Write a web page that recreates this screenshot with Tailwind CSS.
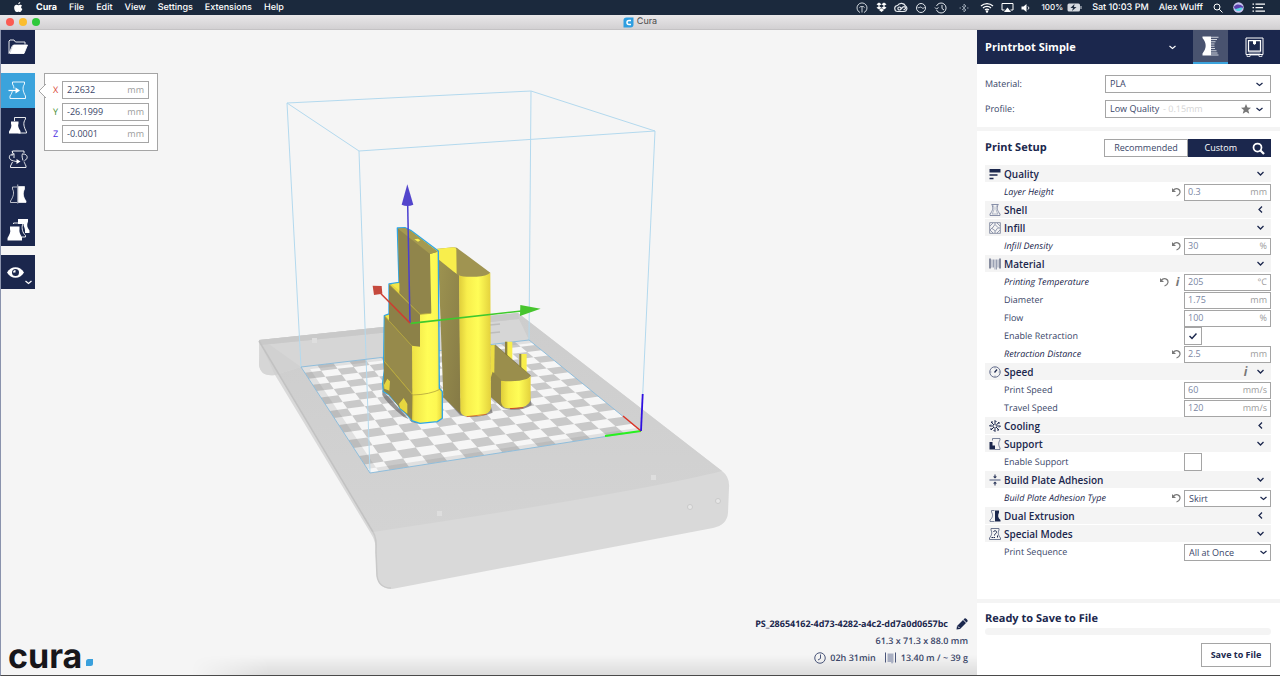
<!DOCTYPE html>
<html lang="en">
<head>
<meta charset="utf-8">
<meta name="viewport" content="width=device-width, initial-scale=1">
<title>Cura</title>
<script src="https://cdn.jsdelivr.net/npm/@tailwindcss/browser@4"></script>
</head>
<body class="h-screen overflow-hidden flex flex-col bg-[#f5f5f5] font-['Open_Sans',sans-serif] [text-rendering:geometricPrecision] text-[9px] leading-4 text-[#3a4668]">

<!-- System menu bar -->
<header class="h-[15px] shrink-0 flex items-center justify-between bg-[#1b293d] text-white font-['Inter',sans-serif] text-[9px] leading-[15px] font-medium pl-[14px] pr-[15px]">
  <nav class="flex items-center gap-3">
    <svg class="w-[9px] h-[11px] mr-[1px]" viewBox="0 0 18 22" fill="#fff"><path d="M12.500 0c.3 2-1.700 4.600-4 4.600C8.200 2.500 10.200.3 12.500 0zM16 7.500c-2.600 1.600-2.300 5.300.7 6.600-.8 2.400-2.700 6-4.700 6.100-1.200 0-1.700-.8-3.200-.8s-2.100.8-3.200.8C3 20.100.3 15.500.3 11.400c0-3.800 2.400-5.900 4.800-5.900 1.600 0 2.700 1 3.800 1s2.200-1.100 4.100-1.100c1.200 0 2.300.8 3 2.100z"/></svg>
    <a href="#" class="font-bold">Cura</a><a href="#">File</a><a href="#">Edit</a><a href="#">View</a><a href="#">Settings</a><a href="#">Extensions</a><a href="#">Help</a>
  </nav>
  <div class="flex items-center gap-[10px]">
    <div class="flex items-center gap-[7px]">
      <svg class="w-3 h-3 mr-[1px]" viewBox="0 0 24 24" fill="none" stroke="#dfe4ea" stroke-width="1.800"><path d="M8 21a10 10 0 1 1 8 0M12 21V9M7 11c1-2 3-2 5-2s4 0 5 2"/></svg>
      <svg class="w-[11px] h-[11px]" viewBox="0 0 22 22" fill="#fff"><path d="M6 1l5 3.500L6 8 1 4.500zM16 1l5 3.500L16 8l-5-3.500zM6 8l5 3.500L6 15l-5-3.500zM16 8l5 3.500-5 3.500-5-3.500zM6 16l5-3.500 5 3.500-5 4z"/></svg>
      <svg class="w-[14px] h-[11px]" viewBox="0 0 28 22" fill="none" stroke="#e5e9ee" stroke-width="2.400"><path d="M8 19a6 6 0 0 1-1-12 9 9 0 0 1 16 1 6 6 0 0 1-3 11z"/><path d="M16 14l-3-3a3 3 0 1 0 0 4l5-5a3 3 0 1 1 1 5"/></svg>
      <svg class="w-3 h-3" viewBox="0 0 24 24" fill="none" stroke="#dfe4ea" stroke-width="2"><circle cx="12" cy="12" r="9"/><path d="M5 10c3 4 5-2 8 1s4 1 6 0"/></svg>
      <svg class="w-[14px] h-3" viewBox="0 0 28 24" fill="none" stroke="#dfe4ea" stroke-width="2"><path d="M5 8a10 10 0 1 1 0 8M16 6v7l4 3M2 11l3 3 4-3"/></svg>
      <svg class="w-[10px] h-[10px] mx-1" viewBox="0 0 20 20" fill="none" stroke="#8c98a6" stroke-width="2"><path d="M6 6l8 8-4 4V2l4 4-8 8M1 10h3M16 10h3"/></svg>
      <svg class="w-[14px] h-[11px]" viewBox="0 0 28 22" fill="none" stroke="#fff" stroke-width="2.500"><path d="M2 8a17 17 0 0 1 24 0M6 12a11.500 11.500 0 0 1 16 0M10 16a6 6 0 0 1 8 0"/><circle cx="14" cy="19" r="1.200" fill="#fff"/></svg>
      <svg class="w-[13px] h-[11px]" viewBox="0 0 26 22" fill="none" stroke="#fff" stroke-width="2"><path d="M7 16H2V3h22v13h-5"/><path d="M13 11l7 9H6z" fill="#fff" stroke="none"/></svg>
      <svg class="w-[11px] h-[10px]" viewBox="0 0 22 20"><path d="M1 7h4l6-5v16l-6-5H1z" fill="#fff"/><path d="M14 7c2 2 2 4 0 6" fill="none" stroke="#fff" stroke-width="2"/></svg>
    </div>
    <div class="flex items-center gap-1 text-[8px]"><span>100%</span>
      <svg class="w-[15px] h-[9px]" viewBox="0 0 30 18"><rect x="1" y="1" width="25" height="16" rx="3" fill="#d5dae0"/><rect x="27" y="6" width="2" height="6" fill="#d5dae0"/><path d="M15 2l-8 8h5l-2 6 9-8h-5z" fill="#1b293d"/></svg>
    </div>
    <span>Sat 10:03 PM</span>
    <span>Alex Wulff</span>
    <svg class="w-[10px] h-[10px]" viewBox="0 0 20 20" fill="none" stroke="#fff" stroke-width="2"><circle cx="8" cy="8" r="6"/><path d="M12.500 12.500L19 19"/></svg>
    <div class="flex items-center gap-2">
      <svg class="w-[11px] h-[11px]" viewBox="0 0 22 22"><circle cx="11" cy="11" r="10.500" fill="#c9c4f0"/><path d="M2 9c5-6 13-5 18 0 0 6-5 3-9 5s-9 1-9-5z" fill="#5b3fae"/><path d="M3 13c6 3 10-4 16-1-2 7-12 9-16 1z" fill="#58d2e6"/></svg>
      <svg class="w-[13px] h-[9px]" viewBox="0 0 26 18" stroke="#fff" stroke-width="2.500"><path d="M7 2h19M7 9h15M7 16h19M1 2h3M1 9h3M1 16h3"/></svg>
    </div>
  </div>
</header>

<!-- Window title bar -->
<div class="h-[15px] shrink-0 relative flex items-center justify-center bg-linear-to-b from-[#e9e7e9] to-[#d2d0d2] border-b border-[#c4c2c4] text-[#4a4a4a] font-['Inter',sans-serif] text-[9px] leading-[14px]">
  <div class="absolute left-[6px] top-[3px] flex gap-[5px]">
    <button aria-label="Close" class="size-2 rounded-full bg-[#fb5b52]"></button>
    <button aria-label="Minimize" class="size-2 rounded-full bg-[#fbbd2e]"></button>
    <button aria-label="Zoom" class="size-2 rounded-full bg-[#2fc93a]"></button>
  </div>
  <svg class="w-[11px] h-[11px] mr-[3px]" viewBox="0 0 22 22"><path d="M7 1h14v14a6 6 0 0 1-6 6H1V7a6 6 0 0 1 6-6z" fill="#2e9ee0"/><path d="M16 7h-4a4 4 0 0 0 0 8h4" fill="none" stroke="#fff" stroke-width="3"/></svg>
  <span>Cura</span>
</div>

<div class="flex-1 min-h-0 flex border-l border-[#8a93ad] border-b border-b-[#4a4a4a]">

  <!-- 3D view -->
  <main class="relative flex-1 min-w-0 overflow-hidden">
    <svg class="absolute inset-0 w-full h-full" viewBox="1 30 976 645" role="img" aria-label="Build plate with three models">
      <defs>
        <linearGradient id="y1" x1="0" x2="1"><stop offset="0" stop-color="#dfcd3a"/><stop offset=".25" stop-color="#f8ee4c"/><stop offset=".6" stop-color="#fffd57"/><stop offset="1" stop-color="#e3d13c"/></linearGradient>
        <linearGradient id="y2" x1="0" x2="1"><stop offset="0" stop-color="#dfcd3a"/><stop offset=".5" stop-color="#efe246"/><stop offset=".75" stop-color="#fffd57"/><stop offset=".9" stop-color="#fdf852"/><stop offset="1" stop-color="#e6d63e"/></linearGradient>
        <linearGradient id="o1" x1="0" x2="1" y1="0" y2="1"><stop offset="0" stop-color="#9d9350"/><stop offset="1" stop-color="#857a46"/></linearGradient>
        <linearGradient id="pl" x1="0" x2="0" y1="0" y2="1"><stop offset="0" stop-color="#cdcdcd"/><stop offset="1" stop-color="#d3d3d3"/></linearGradient>
      </defs>
      <!-- platform -->
      <path d="M259 340L518 313L722 471Q730 477 729 488L728 513Q727 525 713 528L392 589Q379 589 377 576L375 543Q374 538 370 532L275 375Q260 377 259 364Z" fill="#d9d9d9"/>
      <path d="M259 340L518 313L722 471Q640 492 373 532Z" fill="url(#pl)"/>
      <path d="M261 345L519 319L529 340L301 367L275 375Q260 377 259 364Z" fill="#d6d6d6"/>
      <path d="M259 340L275 375L301 367L270 345Z" fill="#d1d1d1"/>
      <path d="M259 340L518 313L519 319L261 345Z" fill="#c9c9c9"/>
      <path d="M259 341L373 532" stroke="#c2c2c2" stroke-width="1.500" fill="none"/>
      <path d="M373 532Q377 538 376 552L377 576Q379 588 391 588" stroke="#c9c9c9" stroke-width="1.500" fill="none"/>
      <g fill="#dedede"><path d="M312 338h5v5h-5zM437 511h5v5h-5zM651 475h5v5h-5z"/></g>
      <g fill="#e6e6e6" stroke="#c4c4c4" stroke-width=".8"><circle cx="690" cy="507" r="2.500"/><circle cx="718" cy="501" r="2.500"/></g>
      <path d="M490 325l10-1M490 333l10-1" stroke="#bcbcbc" stroke-width="1.500"/>
      <path d="M301 367L529 340L641 431L370 473Z" fill="#f6f6f6"/>
      <g id="checks" fill="#c9c9c9"></g>
      <path d="M301 367L308 366L379 472L370 473ZM301 367L529 340L532 343L303 370ZM370 473L641 431L637 428L367 469Z" fill="#8c8c8c" opacity=".2"/>
      <!-- build volume -->
      <path d="M287 103L531 91L655 131L359 151ZM287 103L301 367M531 91L529 340M655 131L641 431M359 151L370 473" fill="none" stroke="#b3d9ee"/>
      <path d="M301 367L529 340L641 431L370 473Z" fill="none" stroke="#8fbddb"/>
      <path d="M641 431L605 436" stroke="#28f01e" stroke-width="1.800"/><path d="M641 431L623 416" stroke="#e03222" stroke-width="1.500"/><path d="M641 431L642.700 394" stroke="#3010e0" stroke-width="1.800"/>

      <g transform="translate(350 170) scale(.3333)">
        <!-- shadows -->
        <path d="M97 660L185 757L210 762L160 740Q110 700 97 675ZM275 675L330 735Q370 750 428 728L420 700ZM422 680L460 715Q510 728 545 705L540 680Z" fill="#6e6b6b" opacity=".7"/>
        <!-- small tray -->
        <path d="M465 515L487 515V585L465 560ZM508 552L530 552V610L508 600Z" fill="#f8ee4c"/>
        <path d="M465 515h7v52l-7-8zM508 552h6v52l-6-6z" fill="#8d8243"/>
        <path d="M422 526L436 525L542 617Q530 636 500 637L455 640L422 625Z" fill="#9a8e4c"/>
        <path d="M422 526L434 525L433 605L428 631L422 628Z" fill="#ecdd43"/>
        <path d="M428 605L457 633V712L422 680V625Z" fill="#918548"/>
        <path d="M453 632Q500 637 530 627Q540 623 542 617V690Q536 712 500 714L472 715Q455 712 453 695Z" fill="url(#y1)"/>
        <path d="M480 716L520 713" stroke="#d04a20" stroke-width="3"/>
        <path d="M436 525L542 617" stroke="#665d2f" stroke-width="1.500"/>
        <!-- tall box -->
        <path d="M258 237L310 232Q322 232 328 239L421 308L410 325L330 326L262 280Z" fill="#a09451"/>
        <path d="M258 237L310 232Q320 233 319 240L320 312L262 275Z" fill="#f8ee4c"/>
        <path d="M265 268L328 319L332 732L280 682Z" fill="url(#o1)"/>
        <path d="M327 316Q340 322 380 320Q410 318 421 308L423 715Q420 734 385 738L350 739Q333 736 331 722Z" fill="url(#y1)"/>
        <path d="M350 740L410 733" stroke="#d4602a" stroke-width="2.500"/>
        <!-- selected model -->
        <path d="M142 174L165 173L182 181L265 243L268 655L273 660L277 665V745L262 755L210 760L187 753L168 730L150 716L145 705L118 675L100 665L98 640L103 600L101 572L103 437L117 432V342L147 337Z" fill="url(#y2)" stroke="#2fa5e6" stroke-width="4" stroke-linejoin="round"/>
        <path d="M144 176L165 175L181 183L263 245L240 252L244 430L210 433L148 370Z" fill="#90854b"/>
        <path d="M144 176L165 175L181 183L263 245L240 252Z" fill="#a59a4f"/>
        <path d="M117 343L148 372L210 433V530L185 527L117 452Z" fill="#8c8148"/>
        <path d="M124 342L148 340V362Z" fill="#f3e748"/>
        <path d="M104 438L117 452L186 528L187 672L103 573Z" fill="#968a4b"/>
        <path d="M105 438L117 435V450Z" fill="#f3e748"/>
        <path d="M102 574L188 674L186 751L168 730L150 714L118 675L101 662Z" fill="#8f8448"/>
        <path d="M102 645L112 626L120 634L118 662L103 656ZM147 702L161 684L172 702V731L150 714Z" fill="#e6d63f"/>
        <path d="M193 208L204 206L211 211L204 215Z" fill="#fbf04e"/>
        <path d="M102 573L188 675Q240 674 272 657M104 438L186 528M117 343L210 433L243 430" fill="none" stroke="#b5a63f" stroke-width="2.500"/>
        <path d="M188 676V750" stroke="#c9b838" stroke-width="4" opacity=".5"/>
        <!-- move handles -->
        <path d="M180 459L173 100" stroke="#4a3fd0" stroke-width="4.500"/><path d="M172 43L155 104Q172 112 190 104Z" fill="#5345cc"/>
        <path d="M180 459L93 371" stroke="#cf3c30" stroke-width="4.500"/><path d="M68 347L95 348L97 371L72 375Z" fill="#c5493d"/>
        <path d="M182 460L515 423" stroke="#3fc92d" stroke-width="5"/><path d="M511 405L572 416L510 438Z" fill="#47c52e"/>
      </g>
    </svg>

    <div class="absolute bottom-0 left-[190px] right-0 h-5 bg-linear-to-t from-black/10 to-transparent mask-l-from-90%"></div>

    <!-- Tool bar -->
    <div class="absolute left-0 top-0 w-[34px] flex flex-col gap-[9px] text-white">
      <button aria-label="Open file" class="h-[34px] bg-[#1b274d] grid place-items-center">
        <svg class="w-5 h-4" viewBox="0 0 40 32" fill="none" stroke="#fff" stroke-width="1.800"><path d="M2 29V4l2-2h8l3 4h19v5M2 29L9 13"/><path d="M11 12h28l-7 17H4z" fill="#fff"/></svg>
      </button>
      <div class="h-[173px] flex flex-col bg-[#1b274d]">
        <button aria-label="Move" class="flex-1 grid place-items-center bg-[#3ba3dc]">
          <svg class="w-5 h-5" viewBox="0 0 40 40" fill="none" stroke="#fff" stroke-width="1.800"><path d="M9 8V4h24v4c-5 7-3 15 2 24v5H4v-5c3-4 4-7 5-11M9 8c2 3 3 6 3 9"/><path d="M1 21h16" stroke-width="2.500"/><path d="M15 15l9 6-9 6z" fill="#fff" stroke="none"/></svg>
        </button>
        <button aria-label="Scale" class="flex-1 grid place-items-center">
          <svg class="w-5 h-5" viewBox="0 0 40 40" fill="none" stroke="#fff" stroke-width="1.800"><path d="M13 12V5h22v3c-6 8-3 16 2 26v2H21"/><path d="M6 13h15v4c-2 5 0 9 4 15v5H2v-4c4-6 6-11 4-16z" fill="#fff" stroke="none"/></svg>
        </button>
        <button aria-label="Rotate" class="flex-1 grid place-items-center">
          <svg class="w-5 h-5" viewBox="0 0 40 40" fill="none" stroke="#fff" stroke-width="1.800"><path d="M9 8V4h23v4M9 26c-1 3-3 5-4 8v3h31v-3c-2-4-3-6-4-9M11 10c-10 0-11 10-3 13 4 1 8 2 10 2M30 10c10 0 11 10 3 13M12 9v9M29 9c-2 5 0 10 1 14M8 5l3 5-4 4"/><path d="M17 20l8 5-8 5z" fill="#fff" stroke="none"/></svg>
        </button>
        <button aria-label="Mirror" class="flex-1 grid place-items-center">
          <svg class="w-5 h-5" viewBox="0 0 40 40" fill="none" stroke="#fff" stroke-width="1.400"><path d="M18 6H9v4c4 7 2 15-4 24v3h13"/><path d="M19.500 1v38"/><path d="M21 5h12v5c-4 8-3 16 3 24v3H21z" fill="#fff"/></svg>
        </button>
        <button aria-label="Per model settings" class="flex-1 grid place-items-center">
          <svg class="w-6 h-6" viewBox="0 0 48 48" fill="none" stroke="#fff" stroke-width="1.800"><path d="M24 4h20v5c-3 7-2 12 3 18v5h-9c1-10-3-12-3-18H24z" fill="#fff" stroke="none"/><path d="M15 14v-2h18v3c-2 8 0 16 6 22v3H32"/><path d="M8 19h19v5c-1 6 1 10 5 16v7H3v-5c4-7 7-12 5-18z" fill="#fff" stroke="none"/></svg>
        </button>
      </div>
      <button aria-label="View mode" class="h-[34px] bg-[#1b274d] relative">
        <svg class="w-[17px] h-[11px] absolute left-[6px] top-[12px]" viewBox="0 0 34 22"><path d="M0 11C8-3 26-3 34 11C26 25 8 25 0 11z" fill="#fff"/><circle cx="17" cy="11" r="7" fill="#1b274d"/><path d="M17 11v-5a5 5 0 0 0-5 5z" fill="#fff"/></svg>
        <svg class="w-[7px] h-[5px] absolute right-[3px] bottom-[4px]" viewBox="0 0 14 10" fill="none" stroke="#fff" stroke-width="2.500"><path d="M1 2l6 5 6-5"/></svg>
      </button>
    </div>

    <!-- Position of the selected model -->
    <form class="absolute left-[43px] top-[43px] w-[114px] flex flex-col gap-1 bg-white border border-[#a5a5a5] pl-[7px] pr-2 py-[7px]">
      <svg class="absolute -left-[7px] top-[9px] w-2 h-4" viewBox="0 0 8 16"><path d="M8 1L1 8l7 7" fill="#fff" stroke="#a5a5a5"/></svg>
      <label class="flex items-center gap-[3px] text-[#d9432f]"><span class="w-[7px] text-center">X</span><span class="flex-1 min-w-0 flex items-center h-[18px] border border-[#a5a5a5] px-1"><input value="2.2632" class="w-full min-w-0 outline-none text-[#3a4668]"><span class="text-[#9a9a9a]">mm</span></span></label>
      <label class="flex items-center gap-[3px] text-[#3b8a2c]"><span class="w-[7px] text-center">Y</span><span class="flex-1 min-w-0 flex items-center h-[18px] border border-[#a5a5a5] px-1"><input value="-26.1999" class="w-full min-w-0 outline-none text-[#3a4668]"><span class="text-[#9a9a9a]">mm</span></span></label>
      <label class="flex items-center gap-[3px] text-[#4a30e0]"><span class="w-[7px] text-center">Z</span><span class="flex-1 min-w-0 flex items-center h-[18px] border border-[#a5a5a5] px-1"><input value="-0.0001" class="w-full min-w-0 outline-none text-[#3a4668]"><span class="text-[#9a9a9a]">mm</span></span></label>
    </form>

    <!-- Brand -->
    <div class="absolute left-[7px] bottom-0 flex items-end text-[#17161a]">
      <span class="font-['Inter',sans-serif] font-bold text-[34px] leading-9 h-9">cura</span>
      <svg class="size-[7px] ml-1 mb-[9px]" viewBox="0 0 14 14"><path d="M5 0h9v9a5 5 0 0 1-5 5H0V5a5 5 0 0 1 5-5z" fill="#3aa0dc"/></svg>
    </div>

    <!-- Job summary -->
    <div class="absolute right-[9px] bottom-[9px] flex flex-col items-end gap-[1px] font-semibold">
      <div class="flex items-center gap-2 font-bold text-[#1b274d]"><span>PS_28654162-4d73-4282-a4c2-dd7a0d0657bc</span>
        <button aria-label="Rename job"><svg class="size-3 block" viewBox="0 0 24 24" fill="#1b274d"><path d="M1 23l1-7L14 4l6 6L8 22zM15 3l2-2q2-1 4 1l1 1q2 2 1 4l-2 2z"/><path d="M4 17l3 3" stroke="#f5f5f5" stroke-width="2"/></svg></button></div>
      <div>61.3 x 71.3 x 88.0 mm</div>
      <div class="flex items-center gap-[9px]">
        <span class="flex items-center gap-1"><svg class="size-3" viewBox="0 0 24 24" fill="none" stroke="#4a567a" stroke-width="2"><circle cx="12" cy="12" r="10.500"/><path d="M13 5v8l-5 3"/></svg>02h 31min</span>
        <span class="flex items-center gap-[5px]"><svg class="w-[11px] h-3" viewBox="0 0 22 24"><path d="M1 1v20M21 1v20" stroke="#4a567a" stroke-width="2"/><path d="M5 3h12v17l-2 3h-2l-1-3H5z" fill="#a9afc2"/></svg>13.40 m / ~ 39 g</span>
      </div>
    </div>
  </main>

  <!-- Side bar -->
  <aside class="w-[303px] shrink-0 flex flex-col bg-white">
    <div class="h-[34px] shrink-0 flex bg-[#1b274d] text-white">
      <button class="flex-1 flex items-center justify-between pl-2 pr-[17px] font-bold text-[11px]">Printrbot Simple
        <svg class="w-[7px] h-[5px]" viewBox="0 0 14 10" fill="none" stroke="#fff" stroke-width="2.200"><path d="M1 2l6 5 6-5"/></svg></button>
      <button aria-label="Prepare" class="w-[35px] grid place-items-center bg-[#49536f] border-b-2 border-[#3ba3dc]">
        <svg class="w-[17px] h-5" viewBox="0 0 34 40"><path d="M1 1h17v38H1v-4c8-10 9-20 0-31z" fill="#fff"/><path d="M18 2.500h15M18 7h12M18 11.500h9M18 16h7M18 20.500h7M18 25h8M18 29.500h11M18 34h13M18 38h15" stroke="#cfd3dc" stroke-width="2"/></svg></button>
      <button aria-label="Monitor" class="w-[52px] grid place-items-center">
        <svg class="w-[19px] h-5" viewBox="0 0 38 40" fill="none" stroke="#fff" stroke-width="2"><path d="M2 2h34v33H2z"/><path d="M7 7h24v21H7z" stroke-width="2.500"/><path d="M7 32h24M4 35v4h6v-3h18v3h6v-4" stroke-width="1.500"/><path d="M16 7h6v6l-3 3-3-3z" fill="#fff" stroke="none"/></svg></button>
    </div>

    <div class="shrink-0 h-[63px] pl-2 pr-[9px] pt-[11px] flex flex-col gap-[7px]">
      <div class="flex justify-between items-center h-[18px]"><label for="mat">Material:</label>
        <div class="relative w-[166px]"><select id="mat" class="appearance-none block w-full h-[18px] border border-[#a5a5a5] pl-1 outline-none"><option>PLA</option></select>
          <svg class="pointer-events-none absolute right-2 top-[7px] w-[7px] h-[5px]" viewBox="0 0 14 10" fill="none" stroke="#1b274d" stroke-width="2.500"><path d="M1 2l6 5 6-5"/></svg></div></div>
      <div class="flex justify-between items-center h-[18px]"><label for="prof">Profile:</label>
        <div class="relative w-[166px]"><select id="prof" class="appearance-none block w-full h-[18px] border border-[#a5a5a5] pl-1 outline-none"><option>Low Quality</option></select>
          <span class="pointer-events-none absolute left-[58px] top-[1px] text-[#d5d5d5]">- 0.15mm</span>
          <svg class="pointer-events-none absolute right-5 top-1 size-[10px]" viewBox="0 0 20 20" fill="#777"><path d="M10 0l3 7 7 .5-5.500 4.700L16.500 19.500 10 15.500 3.500 19.500l2-7.300L0 7.500 7 7z"/></svg>
          <svg class="pointer-events-none absolute right-2 top-[7px] w-[7px] h-[5px]" viewBox="0 0 14 10" fill="none" stroke="#1b274d" stroke-width="2.500"><path d="M1 2l6 5 6-5"/></svg></div></div>
    </div>
    <div class="h-1 shrink-0 bg-[#f4f4f4]"></div>

    <div class="flex-1 min-h-0 pl-2 pr-[9px] pt-2">
      <div class="flex items-center justify-between h-[18px] mb-2">
        <h2 class="font-bold text-[11px] text-[#1b274d]">Print Setup</h2>
        <div class="flex w-[167px] h-[18px]">
          <button class="w-[84px] border border-[#a5a5a5]">Recommended</button>
          <button class="flex-1 flex items-center justify-end gap-[15px] pr-[6px] bg-[#1b274d] text-white">Custom
            <svg class="size-[13px]" viewBox="0 0 26 26" fill="none" stroke="#fff" stroke-width="3.500"><circle cx="11" cy="11" r="8"/><path d="M17 17l7 7" stroke-width="4.500"/></svg></button>
        </div>
      </div>
      <div id="settings"></div>
    </div>

    <div class="h-1 shrink-0 bg-[#f4f4f4]"></div>
    <div class="h-[72px] shrink-0 pl-2 pr-[9px] pt-2 flex flex-col">
      <h2 class="font-bold text-[11px] text-[#1b274d]">Ready to Save to File</h2>
      <div class="h-[7px] mt-[1px] rounded-full bg-[#f4f4f4] shrink-0"></div>
      <button class="self-end mt-2 h-6 w-[70px] border border-[#a5a5a5] font-bold text-[#1b274d]">Save to File</button>
    </div>
  </aside>
</div>

<script>
// Icons of the setting categories, 24x24
const icons = {
  Quality: '<path d="M1 2h22v7H1z" fill="#1b274d"/><path d="M1 14h16M1 21h8" stroke="#1b274d" stroke-width="3"/>',
  Shell: '<path d="M5 1h14M6 1c3 8 1 13-4 19v3h20v-3C17 14 15 9 18 1" fill="none" stroke="#7c85a0" stroke-width="1.800"/><path d="M9 3c2 6 1 11-3 17h12C14 14 13 9 15 3" fill="none" stroke="#9aa1b5" stroke-width="1.500"/>',
  Infill: '<rect x="1.500" y="1.500" width="21" height="21" fill="none" stroke="#6a748f" stroke-width="1.500"/><path d="M2 8l6-6M2 16l5-5M8 22l-6-6M16 22l6-6M22 8l-6-6M12 5l6 6-5 7-7-5zM12 2v3M22 12h-4M12 22v-4" fill="none" stroke="#7c85a0" stroke-width="1.600"/>',
  Material: '<path d="M2 1v20M22 1v20" stroke="#1b274d" stroke-width="2"/><path d="M6 3v16M9 3v16M12 3v20M15 3v20M18 3v16" stroke="#8e96ac" stroke-width="1.800"/>',
  Speed: '<circle cx="12" cy="12" r="10.500" fill="none" stroke="#4a567a" stroke-width="1.600"/><path d="M11 13l5-6" stroke="#1b274d" stroke-width="2.500"/><path d="M12 2v3M2 12h3M19 12h3M12 19v3" stroke="#4a567a"/>',
  Cooling: '<path d="M12 10V1l3 3M14 11l6-7v4M14 12h9l-3 3M14 14l6 6h-4M12 14v9l-3-3M10 14l-6 6v-4M10 12H1l3-3M10 10L4 4h4" fill="none" stroke="#1b274d" stroke-width="2"/>',
  Support: '<path d="M7 1h15v3c-4 6-3 11 0 16v3H12M7 1v4" fill="none" stroke="#5d6885" stroke-width="1.600"/><path d="M1 8h6v7h5v8H1z" fill="#1b274d"/>',
  'Build Plate Adhesion': '<path d="M1 12h22" stroke="#4a567a" stroke-width="2"/><path d="M12 1v5M12 18v5" stroke="#1b274d" stroke-width="2"/><path d="M8 5h8l-4 4zM8 19h8l-4-4z" fill="#1b274d"/>',
  'Dual Extrusion': '<path d="M11 1H5v3c4 6 2 12-3 16v3h9" fill="none" stroke="#5d6885" stroke-width="1.600"/><path d="M12 1h8v4c-3 6-2 11 3 15v3H12z" fill="#1b274d"/>',
  'Special Modes': '<path d="M4 1h16v3c-3 6-1 11 3 16v3H1v-3C5 15 7 10 4 4z" fill="none" stroke="#5d6885" stroke-width="1.800"/><path d="M9 8c1-4 7-3 6 1-1 3-4 2-4 6M11 18v2M17 15v4M5 19h4" fill="none" stroke="#1b274d" stroke-width="2"/>'
};
// [category, open, info] or {name, kind, value, unit, changed, info}
const rows = [
  ['Quality', 1], {n: 'Layer Height', v: '0.3', u: 'mm', c: 1},
  ['Shell', 0],
  ['Infill', 1], {n: 'Infill Density', v: '30', u: '%', c: 1},
  ['Material', 1], {n: 'Printing Temperature', v: '205', u: '°C', c: 1, i: 1}, {n: 'Diameter', v: '1.75', u: 'mm'}, {n: 'Flow', v: '100', u: '%'},
  {n: 'Enable Retraction', k: 'check', v: 1}, {n: 'Retraction Distance', v: '2.5', u: 'mm', c: 1},
  ['Speed', 1, 1], {n: 'Print Speed', v: '60', u: 'mm/s'}, {n: 'Travel Speed', v: '120', u: 'mm/s'},
  ['Cooling', 0],
  ['Support', 1], {n: 'Enable Support', k: 'check', v: 0},
  ['Build Plate Adhesion', 1], {n: 'Build Plate Adhesion Type', k: 'select', v: 'Skirt', c: 1},
  ['Dual Extrusion', 0],
  ['Special Modes', 1], {n: 'Print Sequence', k: 'select', v: 'All at Once'}
];
const info = '<span class="w-[7px] text-center font-[\'Liberation_Serif\',serif] italic font-bold text-[12px] text-[#777]">i</span>';
const undo = '<button aria-label="Reset to default"><svg class="size-[10px] block" viewBox="0 0 20 20" fill="none" stroke="#777" stroke-width="2.200"><path d="M4 7c6-7 15-3 14 4-1 4-4 6-7 7"/><path d="M2 2v8h8z" fill="#777" stroke="none"/></svg></button>';
document.getElementById('settings').innerHTML = rows.map((r, idx) => {
  if (Array.isArray(r)) {
    const chev = r[1] ? 'M1 4l6 6 6-6' : 'M10 1L4 7l6 6';
    return `<button class="w-full h-[18px] flex items-center pl-1 pr-[7px] bg-[#f4f4f4] border-b border-white font-bold text-[#1b274d]">
      <svg class="size-3 mr-[3px]" viewBox="0 0 24 24">${icons[r[0]]}</svg><span class="text-[10px] font-semibold">${r[0]}</span>
      <span class="ml-auto flex items-center gap-2">${r[2] ? info : ''}<svg class="size-[7px]" viewBox="0 0 14 14" fill="none" stroke="#1b274d" stroke-width="2.500"><path d="${chev}"/></svg></span></button>`;
  }
  const id = 's' + idx;
  let field;
  if (r.k === 'check') field = `<span class="relative block size-[18px]"><input id="${id}" type="checkbox" ${r.v ? 'checked' : ''} class="peer appearance-none block size-[18px] border border-[#a5a5a5] bg-white"><svg class="hidden peer-checked:block pointer-events-none absolute left-[5px] top-[5px] size-2" viewBox="0 0 16 16" fill="none" stroke="#1b274d" stroke-width="3"><path d="M1 8l5 5 9-10"/></svg></span>`;
  else if (r.k === 'select') field = `<select id="${id}" class="appearance-none block w-full h-[17px] border border-[#a5a5a5] pl-1 outline-none text-[#3a4668]"><option>${r.v}</option></select><svg class="pointer-events-none absolute right-1 top-[6px] w-[7px] h-[5px]" viewBox="0 0 14 10" fill="none" stroke="#1b274d" stroke-width="2.500"><path d="M1 2l6 5 6-5"/></svg>`;
  else field = `<span class="flex items-center h-[17px] border border-[#a5a5a5] px-[3px]"><input id="${id}" value="${r.v}" class="flex-1 min-w-0 outline-none text-[#7a86a3]"><span class="text-[#9a9a9a]">${r.u}</span></span>`;
  return `<div class="h-[18px] flex items-center pl-[19px]"><label for="${id}" class="${r.c ? 'italic text-[#1b274d]' : ''}">${r.n}</label>
    <span class="ml-auto mr-[3px] flex items-center gap-[5px]">${r.c ? undo : ''}${r.i ? info : ''}</span><div class="relative w-[87px]">${field}</div></div>`;
}).join('');

// Checkerboard of the build plate: projects the unit square on the plate's four corners
const [a, b, c, d] = [[370, 473], [641, 431], [529, 340], [301, 367]], N = 15;
const dx1 = b[0] - c[0], dx2 = d[0] - c[0], sx = a[0] - b[0] + c[0] - d[0];
const dy1 = b[1] - c[1], dy2 = d[1] - c[1], sy = a[1] - b[1] + c[1] - d[1];
const det = dx1 * dy2 - dx2 * dy1, g = (sx * dy2 - dx2 * sy) / det, h = (dx1 * sy - sx * dy1) / det;
const pt = (u, v) => {
  const w = g * u + h * v + 1;
  return [((b[0] - a[0] + g * b[0]) * u + (d[0] - a[0] + h * d[0]) * v + a[0]) / w, ((b[1] - a[1] + g * b[1]) * u + (d[1] - a[1] + h * d[1]) * v + a[1]) / w].map(n => n.toFixed(1)).join(' ');
};
let path = '';
for (let i = 0; i < N; i++) for (let j = 0; j < N; j++) if ((i + j) % 2)
  path += `M${pt(i / N, j / N)}L${pt((i + 1) / N, j / N)}L${pt((i + 1) / N, (j + 1) / N)}L${pt(i / N, (j + 1) / N)}Z`;
document.getElementById('checks').innerHTML = `<path d="${path}"/>`;
</script>
</body>
</html>
